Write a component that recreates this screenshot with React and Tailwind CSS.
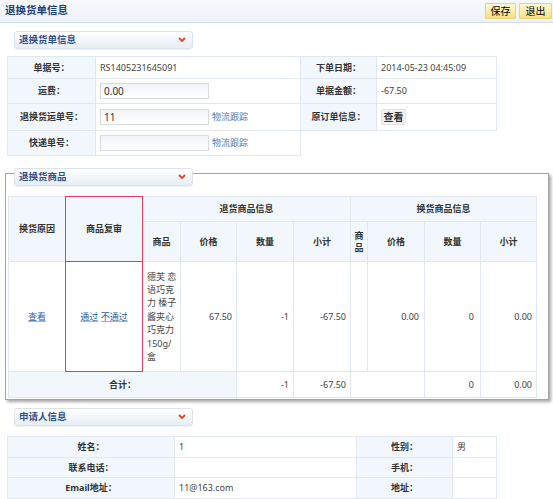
import React from "react";

const font = { fontFamily: '"Noto Sans", "Noto Sans CJK SC", sans-serif' };

function Chevron() {
  return (
    <svg width="8" height="6" viewBox="0 0 8 6" className="shrink-0">
      <path d="M1 1 L4 4 L7 1" fill="none" stroke="#e0442f" strokeWidth="1.8" />
    </svg>
  );
}

function SectionTab({ title }) {
  return (
    <div className="relative z-10 flex h-[18px] w-[179px] items-center justify-between rounded-[3px] border border-[#dbe3ec] bg-gradient-to-b from-white to-[#e6edf5] pl-[4px] pr-[6px] shadow-[0_1px_1px_rgba(0,0,0,0.06)]">
      <span className="text-[9.5px] font-bold text-[#2d4f8c]">{title}</span>
      <Chevron />
    </div>
  );
}

const lab = "border border-[#e0e7ef] bg-[#f2f7fd] text-center font-bold text-[#333]";
const val = "border border-[#e0e7ef] bg-white pl-[4px] text-left text-[#444]";
const th = "border border-[#e0e7ef] bg-[#f2f7fd] text-center font-bold text-[#333]";
const td = "border border-[#e0e7ef] bg-white text-[#444]";
const red = "border-double border-[#e2405a]";

function TextInput({ value }) {
  return (
    <div className="flex h-[16px] w-[109px] items-center border border-[#d6dbe2] bg-gradient-to-b from-[#f3f4f6] to-white pl-[3px] text-[10px] text-[#333]">
      {value}
    </div>
  );
}

function TrackLink() {
  return <span className="ml-[3px] text-[9px] text-[#4f7db8]">物流跟踪</span>;
}

export default function App() {
  return (
    <div className="h-[499px] w-[553px] overflow-hidden bg-white text-[9px]" style={font}>
      <div className="flex h-[23px] items-center justify-between border-b border-[#d3deec] bg-gradient-to-b from-[#f7f9fc] to-[#edf2f8] pl-[5px] pr-[1px]">
        <span className="text-[10.5px] font-bold text-[#1f3f7a]">退换货单信息</span>
        <div className="flex gap-[3px]">
          <button className="h-[16px] w-[31px] rounded-[1px] border border-[#e8d47c] bg-gradient-to-b from-[#fffbd2] to-[#f7e27c] text-[10px] text-black">
            保存
          </button>
          <button className="h-[16px] w-[33px] rounded-[1px] border border-[#e8d47c] bg-gradient-to-b from-[#fffbd2] to-[#f7e27c] text-[10px] text-black">
            退出
          </button>
        </div>
      </div>

      <div className="ml-[14px] mt-[8px]">
        <SectionTab title="退换货单信息" />
      </div>

      <table className="ml-[7px] mt-[7px] table-fixed border-collapse">
        <colgroup>
          <col className="w-[88px]" />
          <col className="w-[205px]" />
          <col className="w-[76px]" />
          <col className="w-[120px]" />
        </colgroup>
        <tbody>
          <tr className="h-[22px]">
            <td className={lab}>单据号：</td>
            <td className={val}>RS1405231645091</td>
            <td className={lab}>下单日期：</td>
            <td className={val}>2014-05-23 04:45:09</td>
          </tr>
          <tr className="h-[25px]">
            <td className={lab}>运费：</td>
            <td className={val}>
              <TextInput value="0.00" />
            </td>
            <td className={lab}>单据金额：</td>
            <td className={val}>-67.50</td>
          </tr>
          <tr className="h-[27px]">
            <td className={lab}>退换货运单号：</td>
            <td className={val}>
              <div className="flex items-center">
                <TextInput value="11" />
                <TrackLink />
              </div>
            </td>
            <td className={lab}>原订单信息：</td>
            <td className={val}>
              <button className="h-[16px] w-[25px] rounded-[2px] border border-[#e3e3e3] bg-[#f3f3f3] text-[10px] font-bold text-[#333]">
                查看
              </button>
            </td>
          </tr>
          <tr className="h-[25px]">
            <td className={lab}>快递单号：</td>
            <td className={val}>
              <div className="flex items-center">
                <TextInput value="" />
                <TrackLink />
              </div>
            </td>
          </tr>
        </tbody>
      </table>

      <div className="relative ml-[5px] mt-[17px] h-[227px] w-[544px] border border-[#a4a4a4] bg-white shadow-[2px_2px_3px_rgba(0,0,0,0.35)]">
        <div className="-mt-[6px] ml-[8px]">
          <SectionTab title="退换货商品" />
        </div>
        <table className="ml-[2px] mt-[10px] table-fixed border-collapse">
          <colgroup>
            <col className="w-[57px]" />
            <col className="w-[77px]" />
            <col className="w-[38px]" />
            <col className="w-[56px]" />
            <col className="w-[57px]" />
            <col className="w-[57px]" />
            <col className="w-[17px]" />
            <col className="w-[57px]" />
            <col className="w-[56px]" />
            <col className="w-[56px]" />
          </colgroup>
          <tbody>
            <tr className="h-[25px]">
              <td rowSpan={2} className={th}>换货原因</td>
              <td rowSpan={2} className={`${th} ${red}`}>商品复审</td>
              <td colSpan={4} className={th}>退货商品信息</td>
              <td colSpan={4} className={th}>换货商品信息</td>
            </tr>
            <tr className="h-[40px]">
              <td className={th}>商品</td>
              <td className={th}>价格</td>
              <td className={th}>数量</td>
              <td className={th}>小计</td>
              <td className={`${th} px-[2px] leading-[12px]`}>商品</td>
              <td className={th}>价格</td>
              <td className={th}>数量</td>
              <td className={th}>小计</td>
            </tr>
            <tr className="h-[110px]">
              <td className={`${td} text-center`}>
                <span className="text-[#2f5ea8] underline decoration-[#9fb4d6]">查看</span>
              </td>
              <td className={`${td} ${red} text-center`}>
                <span className="text-[#2f5ea8] underline decoration-[#9fb4d6]">通过</span>{" "}
                <span className="text-[#2f5ea8] underline decoration-[#9fb4d6]">不通过</span>
              </td>
              <td className={`${td} pl-[4px] text-left leading-[13.4px]`}>
                德芙 恋<br />语巧克<br />力 榛子<br />酱夹心<br />巧克力<br />150g/<br />盒
              </td>
              <td className={`${td} pr-[4px] text-right`}>67.50</td>
              <td className={`${td} pr-[4px] text-right`}>-1</td>
              <td className={`${td} pr-[4px] text-right`}>-67.50</td>
              <td className={td}></td>
              <td className={`${td} pr-[5px] text-right`}>0.00</td>
              <td className={`${td} pr-[6px] text-right`}>0</td>
              <td className={`${td} pr-[4px] text-right`}>0.00</td>
            </tr>
            <tr className="h-[26px]">
              <td colSpan={4} className={th}>合计：</td>
              <td className={`${td} pr-[4px] text-right`}>-1</td>
              <td className={`${td} pr-[4px] text-right`}>-67.50</td>
              <td colSpan={2} className={td}></td>
              <td className={`${td} pr-[6px] text-right`}>0</td>
              <td className={`${td} pr-[4px] text-right`}>0.00</td>
            </tr>
          </tbody>
        </table>
      </div>

      <div className="ml-[14px] mt-[8px]">
        <SectionTab title="申请人信息" />
      </div>

      <table className="ml-[7px] mt-[10px] table-fixed border-collapse">
        <colgroup>
          <col className="w-[167px]" />
          <col className="w-[182px]" />
          <col className="w-[96px]" />
          <col className="w-[44px]" />
        </colgroup>
        <tbody>
          <tr className="h-[21px]">
            <td className={lab}>姓名：</td>
            <td className={val}>1</td>
            <td className={lab}>性别：</td>
            <td className={val}>男</td>
          </tr>
          <tr className="h-[20px]">
            <td className={lab}>联系电话：</td>
            <td className={val}></td>
            <td className={lab}>手机：</td>
            <td className={val}></td>
          </tr>
          <tr className="h-[21px]">
            <td className={lab}>Email地址：</td>
            <td className={val}>11@163.com</td>
            <td className={lab}>地址：</td>
            <td className={val}></td>
          </tr>
        </tbody>
      </table>
    </div>
  );
}
